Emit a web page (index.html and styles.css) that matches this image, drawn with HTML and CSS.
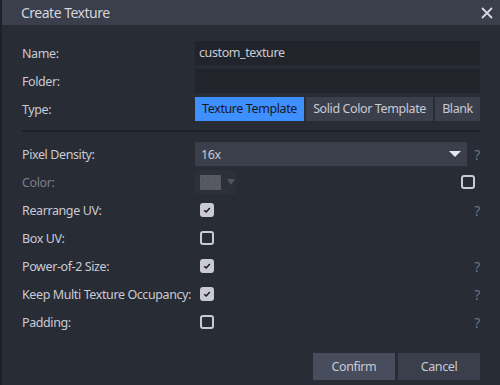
FILE: index.html
```html
<!DOCTYPE html>
<html>
  <head>
    <meta name="viewport" content="width=device-width, initial-scale=1" />
    <link rel="stylesheet" href="styles.css">
  </head>
  <body>
    <div class="dialog">
      <div class="handle">
        <span class="handle-title">Create Texture</span>
        <svg class="close" width="12" height="12" viewBox="0 0 12 12">
          <path d="M1 1 L11 11 M11 1 L1 11" stroke="#d8d8e0" stroke-width="1.8" />
        </svg>
      </div>
      <div class="content">
        <div class="row">
          <div class="label">Name:</div>
          <div class="field"><div class="input">custom_texture</div></div>
        </div>
        <div class="row">
          <div class="label">Folder:</div>
          <div class="field"><div class="input"></div></div>
        </div>
        <div class="row">
          <div class="label">Type:</div>
          <div class="field toggles">
            <div class="toggle active">Texture Template</div>
            <div class="toggle">Solid Color Template</div>
            <div class="toggle">Blank</div>
          </div>
        </div>

        <div class="separator"></div>

        <div class="row">
          <div class="label">Pixel Density:</div>
          <div class="field">
            <div class="select">
              <span>16x</span>
              <span class="arrow"></span>
            </div>
            <span class="help">?</span>
          </div>
        </div>
        <div class="row">
          <div class="label dim">Color:</div>
          <div class="field">
            <div class="color-picker">
              <span class="swatch"></span>
              <span class="small-arrow"></span>
            </div>
            <span class="spacer"></span>
            <span class="checkbox right"></span>
          </div>
        </div>
        <div class="row">
          <div class="label">Rearrange UV:</div>
          <div class="field">
            <span class="checkbox checked"></span>
            <span class="spacer"></span>
            <span class="help">?</span>
          </div>
        </div>
        <div class="row">
          <div class="label">Box UV:</div>
          <div class="field">
            <span class="checkbox"></span>
          </div>
        </div>
        <div class="row">
          <div class="label">Power-of-2 Size:</div>
          <div class="field">
            <span class="checkbox checked"></span>
            <span class="spacer"></span>
            <span class="help">?</span>
          </div>
        </div>
        <div class="row">
          <div class="label">Keep Multi Texture Occupancy:</div>
          <div class="field">
            <span class="checkbox checked"></span>
            <span class="spacer"></span>
            <span class="help">?</span>
          </div>
        </div>
        <div class="row">
          <div class="label">Padding:</div>
          <div class="field">
            <span class="checkbox"></span>
            <span class="spacer"></span>
            <span class="help">?</span>
          </div>
        </div>

        <div class="buttons">
          <div class="btn confirm">Confirm</div>
          <div class="btn">Cancel</div>
        </div>
      </div>
    </div>
  </body>
</html>
```

FILE: styles.css
```css
body {
  margin: 0;
  background: #282c34;
  font-family: "Noto Sans", "Open Sans", sans-serif;
  color: #cacad4;
  overflow: hidden;
}

.dialog {
  width: 498px;
  height: 385px;
  background: #282c34;
  border-left: 2px solid #1e2127;
}

.handle {
  height: 25px;
  background: #3a3f4b;
  display: flex;
  align-items: center;
  justify-content: space-between;
  padding: 0 7px 0 19px;
}

.handle-title {
  font-size: 14px;
  letter-spacing: -0.5px;
  color: #d4d4dc;
}

.content {
  padding: 16px 20px 0 20px;
  display: flex;
  flex-direction: column;
  gap: 4px;
}

.row {
  display: flex;
  align-items: center;
  height: 24px;
  font-size: 12.5px;
  letter-spacing: -0.4px;
  white-space: nowrap;
}

.label {
  width: 173px;
  flex-shrink: 0;
}

.label.dim {
  color: #7b7f89;
}

.field {
  flex: 1;
  display: flex;
  align-items: center;
  height: 24px;
}

.input {
  flex: 1;
  height: 24px;
  line-height: 24px;
  background: #21252b;
  padding: 0 4px;
}

.toggles {
  gap: 2px;
}

.toggle {
  height: 24px;
  line-height: 24px;
  background: #3a3f4b;
  padding: 0 7px;
  flex-grow: 1;
  text-align: center;
}

.toggle.active {
  background: #3e90ff;
  color: #17191d;
}

.separator {
  height: 2px;
  background: #1e2127;
  margin: 5px 0 6px 0;
}

.select {
  flex: 1;
  height: 24px;
  background: #3a3f4b;
  display: flex;
  align-items: center;
  justify-content: space-between;
  padding: 0 6px 0 6px;
}

.arrow {
  width: 0;
  height: 0;
  border-left: 6px solid transparent;
  border-right: 6px solid transparent;
  border-top: 6px solid #e6e6ee;
}

.help {
  width: 13px;
  text-align: right;
  color: #6c707c;
  font-size: 14px;
}

.spacer {
  flex: 1;
}

.color-picker {
  width: 41px;
  height: 24px;
  background: #2c3039;
  display: flex;
  align-items: center;
  padding-left: 5px;
  box-sizing: border-box;
  gap: 6px;
}

.swatch {
  width: 21px;
  height: 15px;
  background-color: #555861;
  background-image: linear-gradient(45deg, #5a5d66 25%, transparent 25%, transparent 75%, #5a5d66 75%);
  background-size: 6px 6px;
}

.small-arrow {
  width: 0;
  height: 0;
  border-left: 4px solid transparent;
  border-right: 4px solid transparent;
  border-top: 6px solid #4f535d;
}

.checkbox {
  width: 14px;
  height: 14px;
  box-sizing: border-box;
  border: 2px solid #cacad4;
  border-radius: 3px;
  margin-left: 5px;
}

.checkbox.right {
  margin-right: 5px;
}

.checkbox.checked {
  background: #cacad4 url("data:image/svg+xml;utf8,<svg xmlns='http://www.w3.org/2000/svg' width='10' height='10' viewBox='0 0 10 10'><path d='M2.2 5.2 L4.2 7 L7.8 3' fill='none' stroke='%2317191d' stroke-width='1.5'/></svg>") center no-repeat;
}

.buttons {
  display: flex;
  justify-content: flex-end;
  gap: 3px;
  margin-top: 15px;
}

.btn {
  width: 82px;
  height: 27px;
  line-height: 27px;
  text-align: center;
  background: #3a3f4b;
  font-size: 12.5px;
  letter-spacing: -0.4px;
}

.btn.confirm {
  background: #474d5d;
}
```
